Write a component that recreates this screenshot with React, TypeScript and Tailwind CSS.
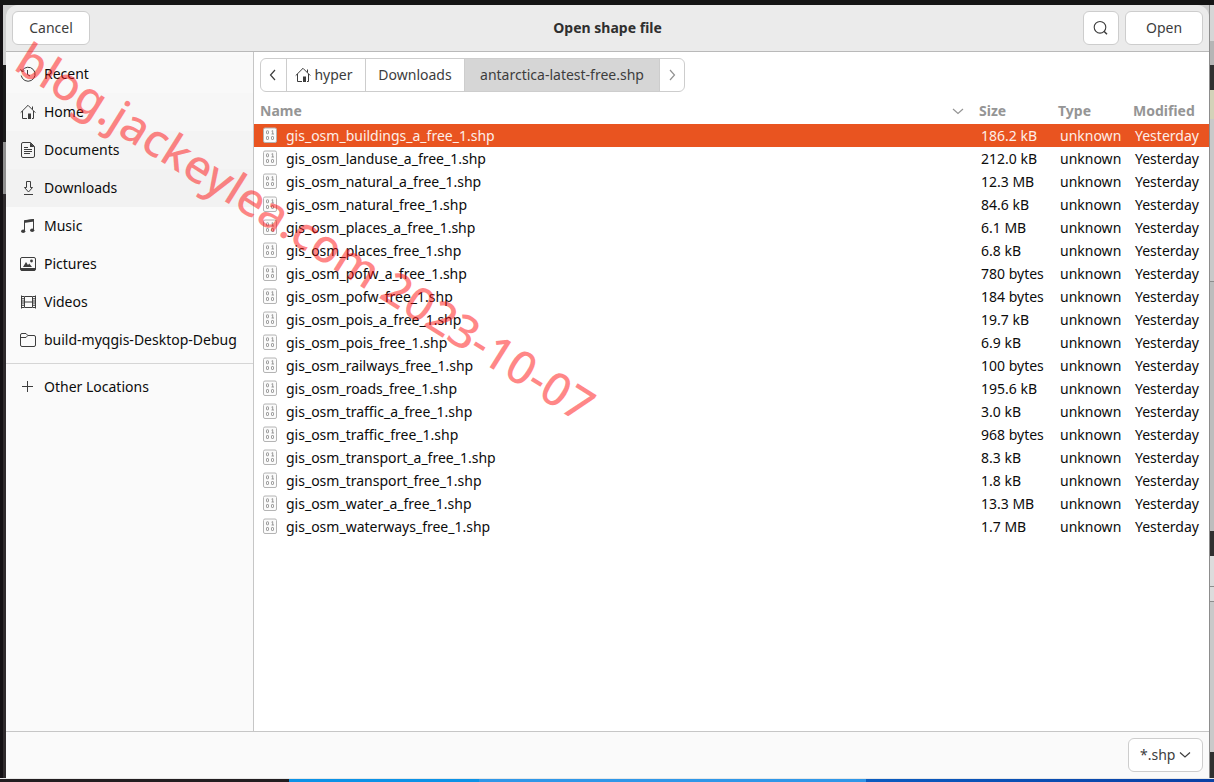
import type { ReactNode } from "react";

const files: [string, string][] = [
  ["gis_osm_buildings_a_free_1.shp", "186.2 kB"],
  ["gis_osm_landuse_a_free_1.shp", "212.0 kB"],
  ["gis_osm_natural_a_free_1.shp", "12.3 MB"],
  ["gis_osm_natural_free_1.shp", "84.6 kB"],
  ["gis_osm_places_a_free_1.shp", "6.1 MB"],
  ["gis_osm_places_free_1.shp", "6.8 kB"],
  ["gis_osm_pofw_a_free_1.shp", "780 bytes"],
  ["gis_osm_pofw_free_1.shp", "184 bytes"],
  ["gis_osm_pois_a_free_1.shp", "19.7 kB"],
  ["gis_osm_pois_free_1.shp", "6.9 kB"],
  ["gis_osm_railways_free_1.shp", "100 bytes"],
  ["gis_osm_roads_free_1.shp", "195.6 kB"],
  ["gis_osm_traffic_a_free_1.shp", "3.0 kB"],
  ["gis_osm_traffic_free_1.shp", "968 bytes"],
  ["gis_osm_transport_a_free_1.shp", "8.3 kB"],
  ["gis_osm_transport_free_1.shp", "1.8 kB"],
  ["gis_osm_water_a_free_1.shp", "13.3 MB"],
  ["gis_osm_waterways_free_1.shp", "1.7 MB"],
];

function Icon({ children }: { children: ReactNode }) {
  return (
    <svg className="size-4 shrink-0 text-[#3d3d3d]" viewBox="0 0 16 16" fill="none" stroke="currentColor" strokeWidth="1" aria-hidden="true">
      {children}
    </svg>
  );
}

const RecentIcon = () => (
  <Icon>
    <path d="M2.1 4.6A7 7 0 1 1 1.2 9.5M.6 3.2l1.2 2.3 2.6-.7M7.5 4v4.5l2.5 1.5" />
  </Icon>
);
const HomeIcon = () => (
  <Icon>
    <path d="M.7 8.6 8 1.3l7.3 7.3M2.5 7v7.5H7M13.5 7v7.5H12M12.5 2.5v3" />
    <path d="M8 9.5h3V15H8z" fill="currentColor" stroke="none" />
  </Icon>
);
const DocumentIcon = () => (
  <Icon>
    <path d="M3 .5h7.5l4 4V14a1.5 1.5 0 0 1-1.5 1.5H3A1.5 1.5 0 0 1 1.5 14V2A1.5 1.5 0 0 1 3 .5z" />
    <path d="M4 5.5h4M4 7.5h8M4 9.5h8M4 11.5h6" />
    <path d="M10 .5v4.5h4.5z" fill="currentColor" stroke="none" />
  </Icon>
);
const DownloadIcon = () => (
  <Icon>
    <path d="M6.5 1.5h4v6h2l-4 4.5-4-4.5h2zM4 14.5h9" />
  </Icon>
);
const MusicIcon = () => (
  <Icon>
    <path d="M4.5 13V2.7l9-1.2V12" />
    <path d="M4 2.4 14 1v2.6L4 5z" fill="currentColor" stroke="none" />
    <ellipse cx="3.2" cy="13.2" rx="2.1" ry="1.8" fill="currentColor" stroke="none" />
    <ellipse cx="12.2" cy="12.2" rx="2.1" ry="1.8" fill="currentColor" stroke="none" />
  </Icon>
);
const PictureIcon = () => (
  <Icon>
    <rect x=".5" y="1.5" width="15" height="13" rx="1.5" />
    <path d="M.5 12h15v1.2a1.5 1.5 0 0 1-1.5 1.5H2A1.5 1.5 0 0 1 .5 13.2zM3 11l3-5 2 3 1.2-1.5L12 11z" fill="currentColor" stroke="none" />
    <circle cx="11.5" cy="5" r="1.4" fill="currentColor" stroke="none" />
  </Icon>
);
const VideoIcon = () => (
  <Icon>
    <path d="M4.5 2.5h8v11h-8zM4.5 8h8M1.5 1.5v13M15.5 1.5v13" />
    <path d="M3 2v12.500M14 2v12.500" strokeWidth="2" strokeDasharray="1 1.200" />
  </Icon>
);
const FolderIcon = () => (
  <Icon>
    <path d="M.5 4V3A1.5 1.5 0 0 1 2 1.5h4l1.8 2H14A1.5 1.5 0 0 1 15.5 5v8a1.5 1.5 0 0 1-1.5 1.5H2A1.5 1.5 0 0 1 .5 13zM.5 5.5H6l1.8-2" />
  </Icon>
);
const PlusIcon = () => (
  <Icon>
    <path d="M7.5 2v11M2 7.5h11" />
  </Icon>
);

function Chevron({ d, className }: { d: string; className: string }) {
  return (
    <svg className={className} viewBox="0 0 12 12" fill="none" stroke="currentColor" strokeWidth="1.2" aria-hidden="true">
      <path d={d} />
    </svg>
  );
}

function BinaryIcon() {
  return (
    <svg className="mb-px block h-4 w-[14px]" viewBox="0 0 14 16" fill="none" aria-hidden="true">
      <rect x=".5" y="1" width="13" height="14.5" rx="1.5" fill="#fbfbfb" stroke="#b4b4b4" />
      <g stroke="#8f8f8f" strokeWidth=".9">
        <rect x="3.5" y="3.8" width="2" height="3" rx=".6" />
        <path d="M8.5 4.2 9.7 3.6V7M8.5 7H11" />
        <rect x="3.5" y="9.5" width="2" height="3" rx=".6" />
        <rect x="8.5" y="9.5" width="2" height="3" rx=".6" />
      </g>
    </svg>
  );
}

const places = [
  { label: "Recent", icon: <RecentIcon />, tone: "bg-[#f9f9f9]" },
  { label: "Home", icon: <HomeIcon />, tone: "bg-[#f7f7f7]" },
  { label: "Documents", icon: <DocumentIcon />, tone: "bg-[#f4f4f4]" },
  { label: "Downloads", icon: <DownloadIcon />, tone: "bg-[#f2f2f2]" },
  { label: "Music", icon: <MusicIcon />, tone: "" },
  { label: "Pictures", icon: <PictureIcon />, tone: "" },
  { label: "Videos", icon: <VideoIcon />, tone: "" },
  { label: "build-myqgis-Desktop-Debug", icon: <FolderIcon />, tone: "" },
];

function Place({ label, icon, tone }: { label: string; icon: ReactNode; tone: string }) {
  return (
    <li>
      <button className={`flex h-[38px] w-full items-center gap-2 pl-[14px] text-left whitespace-nowrap ${tone}`}>
        {icon}
        {label}
      </button>
    </li>
  );
}

const headerButton = "flex h-[34px] items-center justify-center rounded-md border border-[#cdcdcd] bg-white text-[#3d3d3d]";

export default function App() {
  return (
    <div className="relative flex min-h-screen flex-col overflow-hidden bg-[#151515] pt-[5px] font-['Noto_Sans',sans-serif] text-sm text-[#0c0c0c]">
      <div className="flex flex-1">
        <div className="flex w-[6px] shrink-0 flex-col bg-[#141114] pl-[3px]">
          <div className="h-[60px] bg-[#cfcfcf]" />
          <div className="h-[77px] bg-[#1c1c1c]" />
          <div className="h-[52px] bg-[#8f8f8f]" />
          <div className="flex-1 bg-[#2e2a2c]" />
        </div>

        <main className="flex min-w-0 flex-1 flex-col bg-[#cfcfcf]">
          <header className="grid h-[47px] grid-cols-[1fr_auto_1fr] items-center rounded-t-xl border-b border-[#b9b9b9] bg-[#ebebeb] px-[6px]">
            <button className={`${headerButton} w-[78px]`}>Cancel</button>
            <h1 className="font-bold text-[#2f2f2f]">Open shape file</h1>
            <div className="flex justify-end gap-[6px]">
              <button className={`${headerButton} w-9`} aria-label="Search">
                <svg className="size-4" viewBox="0 0 16 16" fill="none" stroke="currentColor" strokeWidth="1.1" aria-hidden="true">
                  <circle cx="7" cy="7.3" r="5.8" />
                  <path d="m11 11.3 3 3" strokeWidth="1.5" />
                </svg>
              </button>
              <button className={`${headerButton} w-[78px]`}>Open</button>
            </div>
          </header>

          <div className="flex flex-1">
            <nav className="w-[248px] shrink-0 border-r border-[#c6c6c6] bg-[#fafafa] pt-[3px]" aria-label="Places">
              <ul>
                {places.map((place) => (
                  <Place key={place.label} {...place} />
                ))}
              </ul>
              <ul className="mt-1 border-t border-[#d5d5d5] pt-1">
                <Place label="Other Locations" icon={<PlusIcon />} tone="" />
              </ul>
            </nav>

            <section className="min-w-0 flex-1 bg-white pt-[6px]">
              <div className="ml-[6px] flex h-[34px] w-fit divide-x divide-[#cdcdcd] overflow-hidden rounded-md border border-[#cdcdcd] text-[#3d3d3d]">
                <button className="flex w-[26px] items-center justify-center" aria-label="Back">
                  <Chevron className="size-3" d="M7 1 2.5 6 7 11" />
                </button>
                <button className="flex w-[79px] items-center justify-center gap-[3px] pr-1">
                  <HomeIcon />
                  hyper
                </button>
                <button className="w-[99px]">Downloads</button>
                <button className="w-[195px] bg-[#d6d6d6]">antarctica-latest-free.shp</button>
                <button className="flex w-6 items-center justify-center text-[#929292]" aria-label="Forward">
                  <Chevron className="size-3" d="M4 1 8.5 6 4 11" />
                </button>
              </div>

              <table className="mt-[7px] w-full table-fixed border-collapse text-left whitespace-nowrap">
                <colgroup>
                  <col className="w-8" />
                  <col />
                  <col className="w-[79px]" />
                  <col className="w-[75px]" />
                  <col className="w-[76px]" />
                </colgroup>
                <thead>
                  <tr className="h-[25px] leading-5 text-[#959595]">
                    <th className="pb-[2px] pl-[6px]" colSpan={2}>
                      <div className="flex items-center justify-between pr-[15px]">
                        Name
                        <Chevron className="size-3" d="M1 4 6 8.5 11 4" />
                      </div>
                    </th>
                    <th className="pb-[2px]">Size</th>
                    <th className="pb-[2px]">Type</th>
                    <th className="pb-[2px]">Modified</th>
                  </tr>
                </thead>
                <tbody>
                  {files.map(([name, size], i) => (
                    <tr key={name} className={i === 0 ? "h-[23px] bg-[#e95420] leading-5 text-[#fdeee8]" : "h-[23px] leading-5"}>
                      <td className="pl-[9px]">
                        <BinaryIcon />
                      </td>
                      <td>{name}</td>
                      <td className="pl-[2px]">{size}</td>
                      <td className="pl-[2px]">unknown</td>
                      <td className="pl-[2px]">Yesterday</td>
                    </tr>
                  ))}
                </tbody>
              </table>
            </section>
          </div>

          <footer className="flex h-[47px] items-center justify-end border-t border-[#c6c6c6] bg-[#fafafa] pr-[6px]">
            <label className={`${headerButton} relative w-[75px]`}>
              <select aria-label="File type" className="h-full w-full appearance-none bg-transparent pl-[11px]">
                <option>*.shp</option>
              </select>
              <Chevron className="pointer-events-none absolute right-[11px] size-3" d="M1 3.5 6 8 11 3.5" />
            </label>
          </footer>
        </main>

        <div className="flex w-[5px] shrink-0 flex-col border-l border-[#8d8d8d] bg-[#c9c9c9]">
          <div className="h-[36px] bg-[#d6d6d6]" />
          <div className="h-[24px] bg-[#b5b5b5]" />
          <div className="h-[25px] bg-[#303030]" />
          <div className="h-[29px] bg-[#d3d2b8]" />
          <div className="h-[163px] border-b border-[#8d8d8d]" />
          <div className="flex-1 bg-[#bdbdbd]" />
          <div className="h-[25px] bg-[#303030]" />
          <div className="h-[31px] border-b border-[#8d8d8d] bg-[#dcdcdc]" />
          <div className="h-[15px] border-b border-[#8d8d8d] bg-[#dcdcdc]" />
          <div className="h-[150px]" />
          <div className="h-[26px] bg-[#303030]" />
        </div>
      </div>

      <div className="flex h-1 border-t border-[#e8e8e8]">
        <div className="w-[289px] bg-[#221e20]" />
        <div className="w-[190px] bg-[#0c92e6]" />
        <div className="w-[387px] bg-[#2f97e8]" />
        <div className="flex-1 bg-linear-to-r from-[#0a5cc0] to-[#0a40a4]" />
      </div>

      <p className="pointer-events-none absolute top-[34px] left-[34px] origin-top-left rotate-32 text-[46px] leading-none font-medium whitespace-nowrap text-[#ff1010]/50">
        blog.jackeylea.com 2023-10-07
      </p>
    </div>
  );
}
